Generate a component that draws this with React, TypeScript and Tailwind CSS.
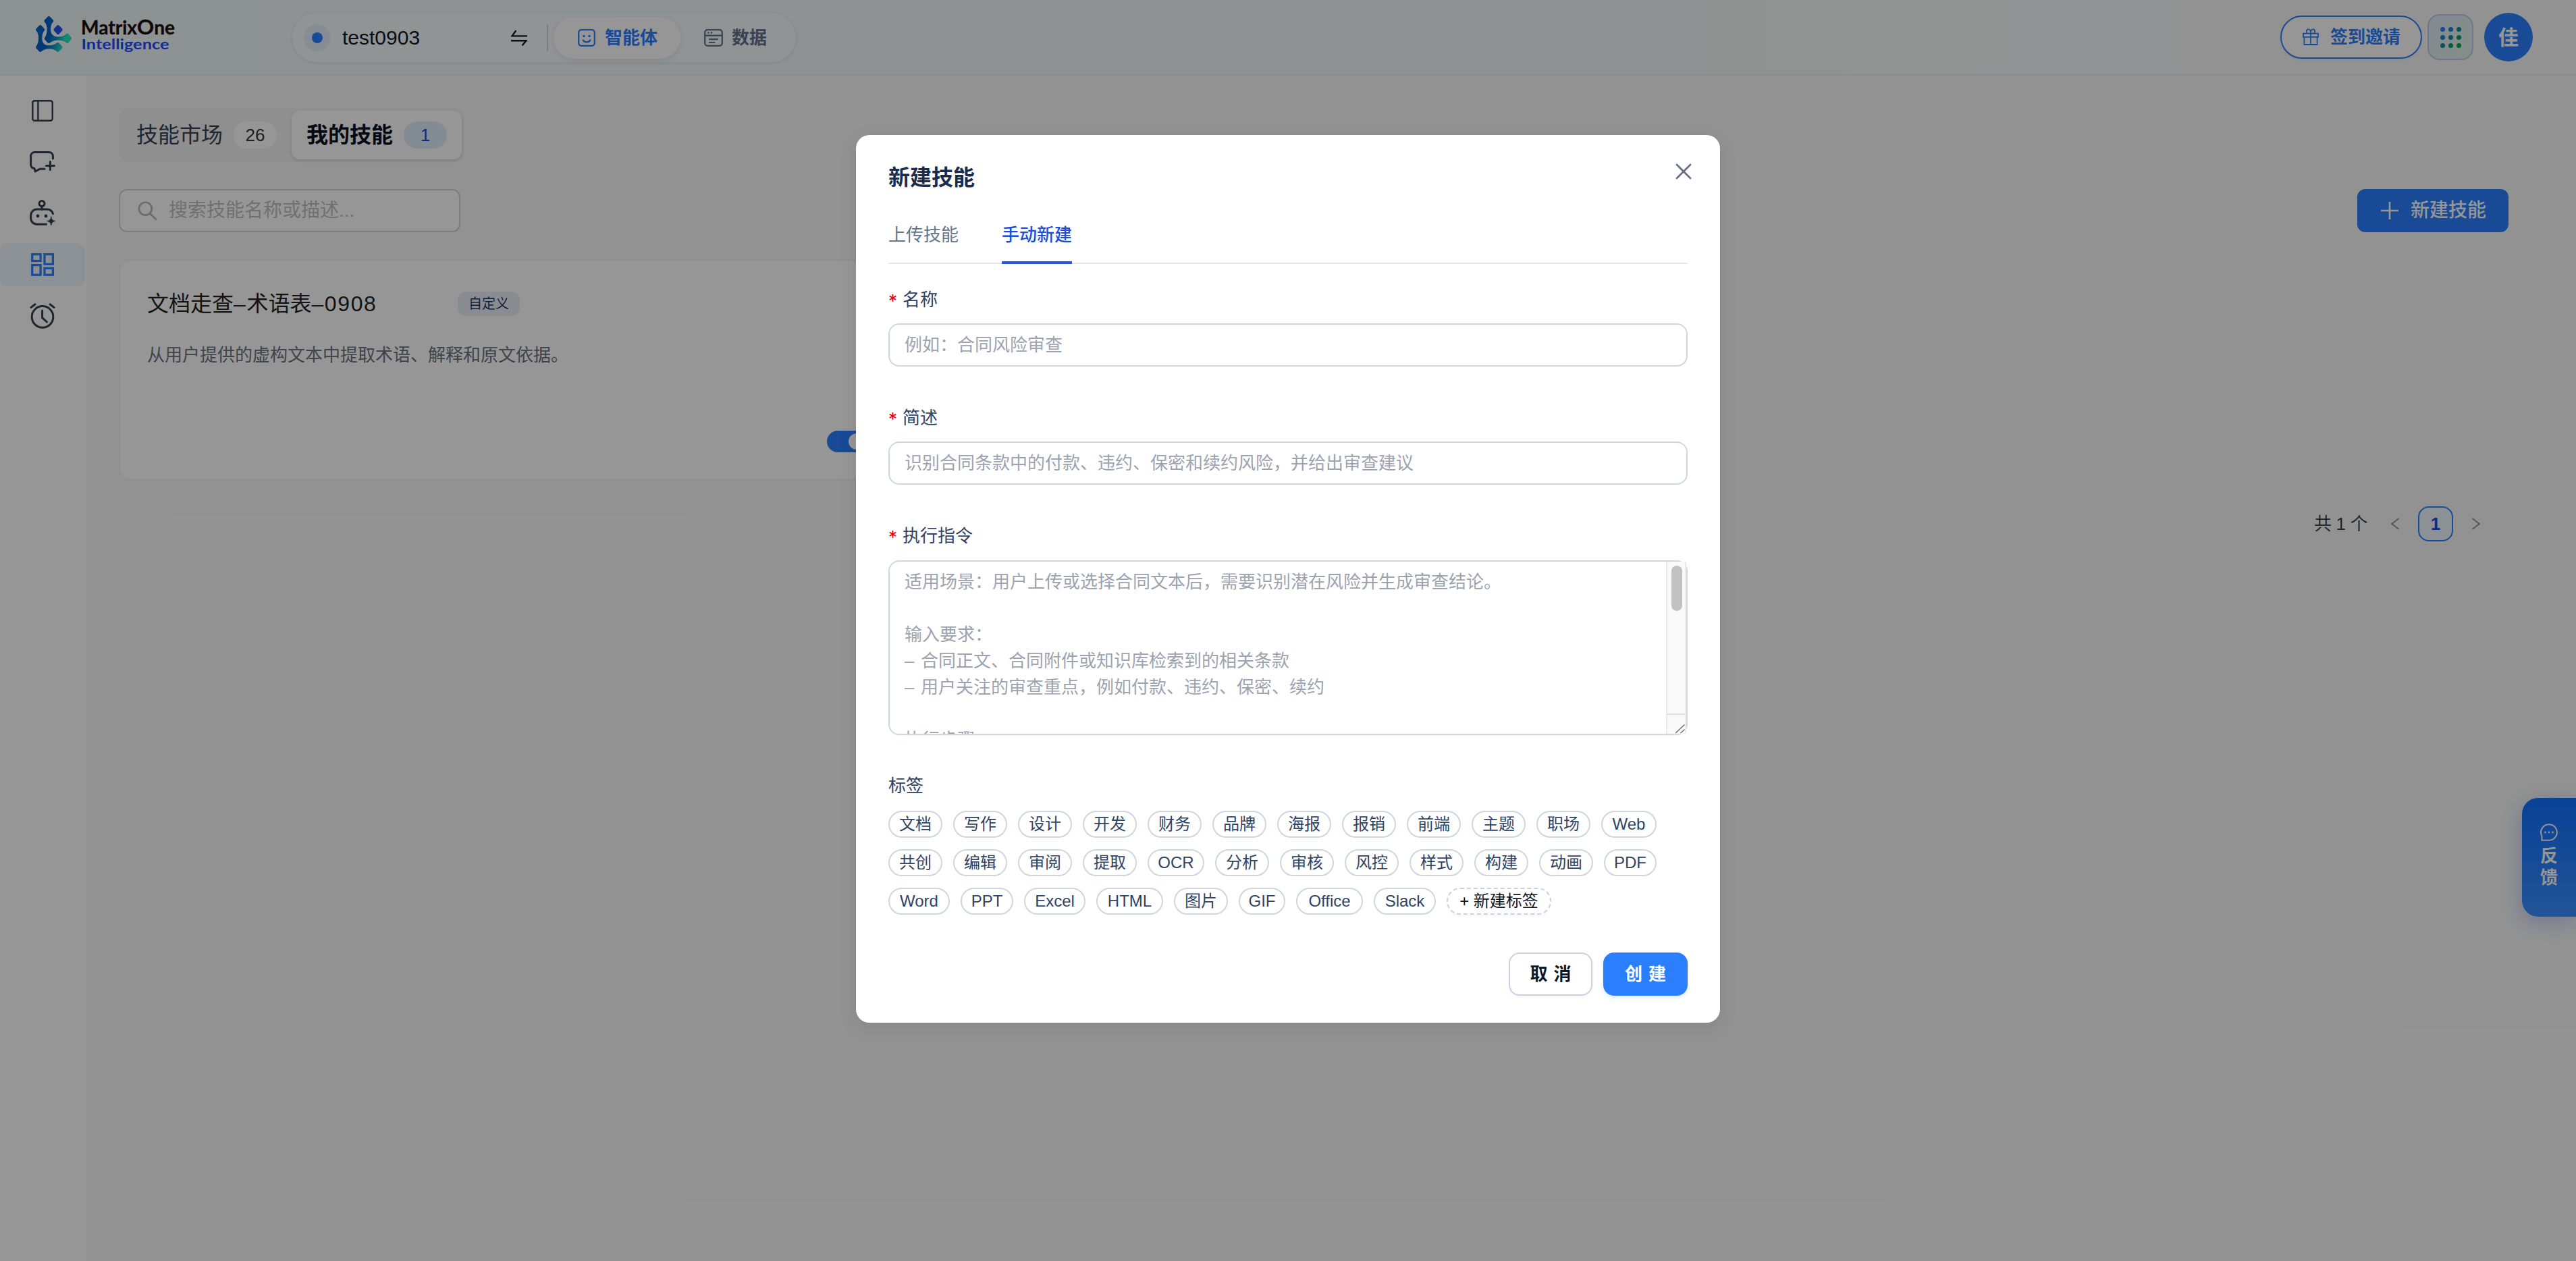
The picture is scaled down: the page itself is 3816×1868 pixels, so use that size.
import React from "react";

type IconProps = { className?: string };

const LogoMark = ({ className }: IconProps) => (
  <svg viewBox="0 0 55 55" className={className}>
    <defs>
      <linearGradient id="markGradient" gradientUnits="userSpaceOnUse" x1="4" y1="20" x2="50" y2="36">
        <stop offset="0" stopColor="#0068cc" />
        <stop offset="0.36" stopColor="#005cc0" />
        <stop offset="0.6" stopColor="#0f8cc4" />
        <stop offset="0.9" stopColor="#24e8bc" />
      </linearGradient>
    </defs>
    <g fill="url(#markGradient)">
      <path d="M18.9 1.6 Q20.3 0.2 21.7 1.6 L26.6 6.6 Q28 8 26.6 9.4 Q22.9 13.5 22.9 20 Q22.9 31.4 34 31.4 Q42 31.4 46.3 27.2 Q47.7 25.8 49.1 27.2 L53.6 32.4 Q54.7 33.9 53.6 35.3 L49.1 40.4 Q47.7 41.8 46.3 40.4 Q42 36.4 34 36.4 Q27 36.4 22.2 40.2 Q20.3 42 18.4 40.2 L14.4 35.6 Q13 34 14.4 32.4 Q17.7 28.5 17.7 20 Q17.7 13.5 14 9.4 Q12.6 8 14 6.6 Z" />
      <path d="M6.3 14.6 Q7.7 13.2 9.1 14.6 L13.6 19.6 Q15 21 13.6 22.4 Q10.3 26.5 10.3 33 Q10.3 44.3 20 44.3 Q28 44.3 32.4 40.6 Q33.8 39.2 35.2 40.6 L40 45.6 Q41.2 47 40 48.4 L35.2 53.4 Q33.8 54.6 32.4 53.4 Q28 49.3 20 49.3 Q14 49.3 9.2 53.2 Q7.7 54.6 6.3 53.4 L1.6 48.4 Q0.4 47 1.6 45.6 Q5.1 41 5.1 33 Q5.1 26.5 1.6 22.4 Q0.4 21 1.6 19.6 Z" />
    </g>
    <path d="M32.6 14.6 Q34 13.2 35.4 14.6 L40 19.6 Q41.2 21 40 22.4 L35.4 27.4 Q34 28.8 32.6 27.4 L28 22.4 Q26.8 21 28 19.6 Z" fill="#2450f4" />
  </svg>
);

const SwapIcon = ({ className }: IconProps) => (
  <svg viewBox="0 0 24 24" className={className} fill="none" stroke="currentColor" strokeWidth="2.4">
    <path d="M24 9.4 H1.5 L7.4 1.2" />
    <path d="M0 16.2 H22.4 L16.5 23.4" />
  </svg>
);

const SmileIcon = ({ className }: IconProps) => (
  <svg viewBox="0 0 26 26" className={className} fill="none" stroke="currentColor" strokeWidth="2.2" strokeLinecap="round">
    <rect x="1.2" y="1.2" width="23.6" height="23.6" rx="4" />
    <circle cx="9" cy="10.5" r="1.8" fill="currentColor" stroke="none" />
    <circle cx="17" cy="10.5" r="1.8" fill="currentColor" stroke="none" />
    <path d="M7.6 16.4 C9.8 20.4 16.2 20.4 18.4 16.4" />
  </svg>
);

const DataIcon = ({ className }: IconProps) => (
  <svg viewBox="0 0 28 26" className={className} fill="none" stroke="currentColor" strokeWidth="2.2" strokeLinecap="round">
    <rect x="1.2" y="1.2" width="25.6" height="23.6" rx="4" />
    <path d="M1.5 9.6 H26.5 M8 15.2 H20 M8 20 H15.5" />
    <circle cx="6.4" cy="5.4" r="1.3" fill="currentColor" stroke="none" />
    <circle cx="11" cy="5.4" r="1.3" fill="currentColor" stroke="none" />
  </svg>
);

const GiftIcon = ({ className }: IconProps) => (
  <svg viewBox="0 0 24 26" className={className} fill="none" stroke="currentColor" strokeWidth="1.8">
    <rect x="1" y="7.6" width="22" height="5.2" />
    <path d="M2.4 12.8 V24 H21.6 V12.8 M12 7.6 V24" />
    <path d="M12 7.4 C12 3.6 10.8 1.4 8.6 1.4 C5.4 1.4 5 5.4 7 7.4 M12 7.4 C12 3.6 13.2 1.4 15.4 1.4 C18.6 1.4 19 5.4 17 7.4" />
  </svg>
);

const PanelIcon = ({ className }: IconProps) => (
  <svg viewBox="0 0 32 32" className={className} fill="none" stroke="currentColor" strokeWidth="2.4">
    <rect x="1.3" y="1.3" width="29.4" height="29.4" rx="3" />
    <path d="M9.4 1.3 V30.7" />
  </svg>
);

const ChatPlusIcon = ({ className }: IconProps) => (
  <svg viewBox="0 0 38 32" className={className} fill="none" stroke="currentColor" strokeWidth="3" strokeLinecap="round" strokeLinejoin="round">
    <path d="M34.4 11 V7.6 C34.4 4 32.2 1.6 28.6 1.6 H7.6 C4 1.6 1.6 4 1.6 7.6 V19.6 C1.6 22.8 3.6 25.2 7 25.6 L8.2 30 L15 26.2 H22" />
    <path d="M30.4 15.6 V27.6 M24.4 21.6 H36.4" />
  </svg>
);

const RobotIcon = ({ className }: IconProps) => (
  <svg viewBox="0 0 38 38" className={className} fill="none" stroke="currentColor" strokeWidth="3" strokeLinecap="round">
    <circle cx="18" cy="5.6" r="4" />
    <path d="M18 9.8 V14" />
    <path d="M34.4 20.6 C33.2 16.6 29.6 14 25.4 14 H10.8 C5.6 14 1.6 18.2 1.6 23.4 V27 C1.6 32.4 5.6 36.2 10.8 36.2 H24.6" />
    <circle cx="12" cy="24" r="2.4" fill="currentColor" stroke="none" />
    <circle cx="24" cy="24" r="2.4" fill="currentColor" stroke="none" />
    <path d="M31.8 25.2 C32.6 29.2 33.8 30.6 38 31.5 C33.8 32.4 32.6 33.8 31.8 38 C31 33.8 29.8 32.4 25.6 31.5 C29.8 30.6 31 29.2 31.8 25.2 Z" fill="currentColor" stroke="currentColor" strokeWidth="0.8" />
  </svg>
);

const BlocksIcon = ({ className }: IconProps) => (
  <svg viewBox="0 0 34 34" className={className} fill="none" stroke="currentColor" strokeWidth="3.2">
    <rect x="1.7" y="1.7" width="12.4" height="9.8" />
    <rect x="20" y="1.7" width="12.4" height="14.6" />
    <rect x="1.7" y="17.6" width="12.4" height="14.6" />
    <rect x="20" y="22.4" width="12.4" height="9.8" />
  </svg>
);

const AlarmIcon = ({ className }: IconProps) => (
  <svg viewBox="0 0 38 38" className={className} fill="none" stroke="currentColor" strokeWidth="3" strokeLinecap="round" strokeLinejoin="round">
    <circle cx="19" cy="20.4" r="15.8" />
    <path d="M18.6 11 V21.6 L25.4 28 M2 6.4 L8 1.8 M36 6.4 L30 1.8" />
  </svg>
);

const SearchIcon = ({ className }: IconProps) => (
  <svg viewBox="0 0 30 30" className={className} fill="none" stroke="currentColor" strokeWidth="2.8">
    <circle cx="11.8" cy="11.6" r="9.8" />
    <path d="M18.8 18.8 L28.6 28.4" />
  </svg>
);

const PlusIcon = ({ className }: IconProps) => (
  <svg viewBox="0 0 26 26" className={className} fill="none" stroke="currentColor" strokeWidth="2.6">
    <path d="M13 0 V26 M0 13 H26" />
  </svg>
);

const CloseIcon = ({ className }: IconProps) => (
  <svg viewBox="0 0 24 24" className={className} fill="none" stroke="currentColor" strokeWidth="2.8" strokeLinecap="round">
    <path d="M2 2 L22 22 M22 2 L2 22" />
  </svg>
);

const Chevron = ({ className }: IconProps) => (
  <svg viewBox="0 0 12 18" className={className} fill="none" stroke="currentColor" strokeWidth="2">
    <path d="M11.4 1 L1.4 9 L11.4 17" />
  </svg>
);

const BubbleIcon = ({ className }: IconProps) => (
  <svg viewBox="0 0 26 26" className={className} fill="none" stroke="currentColor" strokeWidth="2">
    <path d="M13 1.2 A11.8 11.8 0 1 1 13 24.8 H2.4 V18.4 A11.8 11.8 0 0 1 13 1.2 Z" />
    <circle cx="7.4" cy="13" r="1.4" fill="currentColor" stroke="none" />
    <circle cx="13" cy="13" r="1.4" fill="currentColor" stroke="none" />
    <circle cx="18.6" cy="13" r="1.4" fill="currentColor" stroke="none" />
  </svg>
);

const gridDots = ["#2b7fff", "#1f86d0", "#128a9c", "#1f86c4", "#148c98", "#0a9a6c", "#128a9c", "#0a9a6c", "#08a84a"];

const Header = () => (
  <header className="flex h-[112px] items-start border-b-2 border-[#e9ecee] bg-[linear-gradient(90deg,#eff9f9_0%,#f3f9f9_22%,#f1f9f9_42%,#f8f9fa_85%,#f9f9f9_100%)]">
    <div className="ml-[52px] mt-[23px] flex">
      <LogoMark className="h-[55px] w-[55px]" />
      <svg viewBox="-4 -10 148 74" className="-mt-2.5 ml-[11px] h-[74px] w-[148px]">
        <g fontFamily="Lato, sans-serif" fontWeight="700">
          <text x="-2" y="27.6" fill="#1b0e0e" stroke="#1b0e0e" strokeWidth="0.3" fontSize="28" textLength="139" lengthAdjust="spacingAndGlyphs">
            Matrix<tspan fontSize="31">O</tspan>ne
          </text>
          <text x="-1.5" y="50.4" fill="#224cff" fontSize="21.5" textLength="130" lengthAdjust="spacingAndGlyphs">
            Intelligence
          </text>
        </g>
      </svg>
    </div>

    <div className="ml-[167px] mt-[19px] flex h-[73px] w-[746px] items-center rounded-full bg-white/35 shadow-[0_1px_6px_rgba(15,23,42,0.10)]">
      <span className="ml-[17px] flex h-10 w-10 items-center justify-center rounded-full bg-[#e8eefb]">
        <span className="h-4 w-4 rounded-full bg-[#2b7fff]" />
      </span>
      <span className="ml-[17px] w-[250px] text-[30px] leading-10 text-[#0f172a]">test0903</span>
      <SwapIcon className="h-6 w-6 text-[#0f172a]" />
      <span className="ml-[29px] h-10 w-0.5 bg-[#d2d6d9]" />
      <div className="ml-2 flex h-[62px] w-[188px] items-center rounded-full bg-white pl-9 text-[#2b7fff] shadow-[0_2px_10px_rgba(15,23,42,0.09)]">
        <SmileIcon className="h-[26px] w-[26px]" />
        <span className="ml-[14px] text-[26px] font-semibold leading-10">智能体</span>
      </div>
      <div className="flex items-center pl-[35px] text-[#64708a]">
        <DataIcon className="h-[26px] w-7" />
        <span className="ml-[13px] text-[26px] font-semibold leading-10">数据</span>
      </div>
    </div>

    <div className="ml-auto mr-16 mt-[19px] flex h-[72px] items-center">
      <div className="flex h-16 w-[210px] items-center rounded-full border-2 border-[#2b7fff] bg-white pl-[31px] text-[#2b7fff] shadow-[0_2px_4px_rgba(15,23,42,0.06)]">
        <GiftIcon className="h-[26px] w-6" />
        <span className="ml-[17px] text-[26px] font-bold leading-10">签到邀请</span>
      </div>
      <div className="ml-2 grid h-[68px] w-[68px] grid-cols-[7px_7px_7px] place-content-center gap-[5px] rounded-[18px] border-2 border-[#b9cdea] bg-[linear-gradient(135deg,#e2ebfb,#e0f2e6)]">
        {gridDots.map((color, i) => (
          <span key={i} className="h-[7px] w-[7px] rounded-full" style={{ backgroundColor: color }} />
        ))}
      </div>
      <div className="ml-4 flex h-[72px] w-[72px] items-center justify-center rounded-full bg-[#2b7fff] text-[30px] font-semibold text-white">佳</div>
    </div>
  </header>
);

const Sidebar = () => (
  <nav className="flex w-32 flex-col bg-white text-[#33404f]">
    <div className="mt-5 flex h-16 w-[126px] items-center justify-center">
      <PanelIcon className="h-8 w-8" />
    </div>
    <div className="mt-3 flex h-16 w-[126px] items-center justify-center">
      <ChatPlusIcon className="h-8 w-[38px]" />
    </div>
    <div className="mt-3 flex h-16 w-[126px] items-center justify-center pb-0.5">
      <RobotIcon className="h-[38px] w-[38px]" />
    </div>
    <div className="mt-3 flex h-16 w-[126px] items-center justify-center rounded-xl bg-[#eff6ff] text-[#2b7fff]">
      <BlocksIcon className="h-[34px] w-[34px]" />
    </div>
    <div className="mt-3 flex h-16 w-[126px] items-center justify-center">
      <AlarmIcon className="h-[38px] w-[38px]" />
    </div>
  </nav>
);

const Main = () => (
  <main className="flex flex-1 flex-col pl-12 pr-[100px] pt-12">
    <div className="flex h-20 w-[512px] items-center rounded-2xl bg-[#f3f3f4] px-1 text-[32px]">
      <div className="flex h-[72px] items-center px-[22px] text-[#334155]">
        技能市场
        <span className="ml-4 flex h-10 w-16 items-center justify-center rounded-full bg-white text-[26px] text-[#333]">26</span>
      </div>
      <div className="flex h-[72px] items-center rounded-xl bg-white px-[22px] font-semibold text-[#0a1020] shadow-[0_2px_5px_rgba(0,0,0,0.12)]">
        我的技能
        <span className="ml-4 flex h-10 w-16 items-center justify-center rounded-full bg-[#dfecfd] text-[26px] font-normal text-[#1447e6]">1</span>
      </div>
    </div>

    <div className="mt-10 flex justify-between">
      <div className="flex h-16 w-[506px] items-center rounded-xl border-2 border-[#d4d4d4] bg-white pl-[26px] text-[#bfbfbf]">
        <SearchIcon className="h-[29px] w-[29px] text-[#b8b8b8]" />
        <span className="ml-[17px] text-[28px]">搜索技能名称或描述...</span>
      </div>
      <button className="flex h-16 w-[224px] items-center rounded-xl bg-[#2b7fff] pl-[35px] text-white">
        <PlusIcon className="h-[26px] w-[26px]" />
        <span className="ml-[18px] text-[28px] font-medium">新建技能</span>
      </button>
    </div>

    <div className="mt-10 grid grid-cols-3 gap-6">
      <article className="flex h-[328px] flex-col rounded-2xl border-2 border-[#f1f2f3] bg-white px-10">
        <div className="mt-[40px] flex h-12 items-center">
          <h3 className="w-[460px] text-[32px] text-[#222]">
            文档走查<span className="tracking-[1.6px]">–</span>术语表<span className="tracking-[1.6px]">–0908</span>
          </h3>
          <span className="flex h-9 w-[92px] items-center justify-center rounded-xl bg-[#e9f0f7] text-[20px] text-[#24365f]">自定义</span>
        </div>
        <p className="mt-8 text-[26px] leading-10 text-[#6a7282]">从用户提供的虚构文本中提取术语、解释和原文依据。</p>
        <div className="mb-10 ml-auto mr-[13px] mt-auto flex h-8 w-[60px] items-center justify-end rounded-full bg-[#2b7fff] p-1">
          <span className="h-6 w-6 rounded-full bg-white" />
        </div>
      </article>
    </div>

    <div className="mt-[38px] flex h-[52px] items-center justify-end text-[26px] text-[#334155]">
      <span className="tracking-[-0.4px]">共 1 个</span>
      <Chevron className="ml-[35px] h-[18px] w-3 text-[#8d939f]" />
      <span className="ml-7 flex h-[52px] w-[52px] items-center justify-center rounded-2xl border-2 border-[#2b7fff] bg-[#eff6ff] font-bold text-[#1447e6]">1</span>
      <Chevron className="ml-7 mr-[42px] h-[18px] w-3 rotate-180 text-[#8d939f]" />
    </div>
  </main>
);

const Label = ({ children, required = true }: { children: React.ReactNode; required?: boolean }) => (
  <div className="flex h-10 items-center text-[26px] text-[#2f4365]">
    {required && <span className="w-[21px] pt-1 font-['Inter'] text-[26px] leading-9 text-[#e7000b]">*</span>}
    {children}
  </div>
);

const tagRows: [string, string][][] = [
  [
    ["文档", "w-20"], ["写作", "w-20"], ["设计", "w-20"], ["开发", "w-20"], ["财务", "w-20"], ["品牌", "w-20"],
    ["海报", "w-20"], ["报销", "w-20"], ["前端", "w-20"], ["主题", "w-20"], ["职场", "w-20"], ["Web", "w-[82px]"],
  ],
  [
    ["共创", "w-20"], ["编辑", "w-20"], ["审阅", "w-20"], ["提取", "w-20"], ["OCR", "w-[84px]"], ["分析", "w-20"],
    ["审核", "w-20"], ["风控", "w-20"], ["样式", "w-20"], ["构建", "w-20"], ["动画", "w-20"], ["PDF", "w-[78px]"],
  ],
  [
    ["Word", "w-[91px]"], ["PPT", "w-[78px]"], ["Excel", "w-[91px]"], ["HTML", "w-[99px]"],
    ["图片", "w-20"], ["GIF", "w-[69px]"], ["Office", "w-[99px]"], ["Slack", "w-[92px]"],
  ],
];

const instructionLines = [
  { text: "适用场景：用户上传或选择合同文本后，需要识别潜在风险并生成审查结论。" },
  { text: "" },
  { text: "输入要求：" },
  { text: "合同正文、合同附件或知识库检索到的相关条款", bullet: true },
  { text: "用户关注的审查重点，例如付款、违约、保密、续约", bullet: true },
  { text: "" },
  { text: "执行步骤：" },
];

const Modal = () => (
  <section className="flex h-[1315px] w-[1280px] flex-col rounded-[20px] bg-white px-12 shadow-[0_8px_28px_rgba(0,0,0,0.08)]">
    <div className="mt-[39px] flex h-12 items-center justify-between">
      <h2 className="text-[32px] font-bold text-[#1b2b4b]">新建技能</h2>
      <CloseIcon className="-mr-1.5 mb-[18px] h-6 w-6 text-[#667085]" />
    </div>

    <div className="mt-9 flex h-[68px] gap-16 border-b-2 border-[#e5e7eb] text-[26px]">
      <div className="h-[68px] pt-[5px] leading-10 text-[#64748b]">上传技能</div>
      <div className="h-[68px] border-b-4 border-[#2558e0] pt-[5px] font-medium leading-10 text-[#1d4ed8]">手动新建</div>
    </div>

    <div className="mt-[33px]">
      <Label>名称</Label>
      <div className="mt-[15px] flex h-16 items-center rounded-2xl border-2 border-[#d1d5dc] px-[22px] text-[26px] text-[#9ca3af]">例如：合同风险审查</div>
    </div>
    <div className="mt-14">
      <Label>简述</Label>
      <div className="mt-[15px] flex h-16 items-center rounded-2xl border-2 border-[#d1d5dc] px-[22px] text-[26px] text-[#9ca3af]">
        识别合同条款中的付款、违约、保密和续约风险，并给出审查建议
      </div>
    </div>
    <div className="mt-14">
      <Label>执行指令</Label>
      <div className="mt-[16px] flex h-[259px] rounded-2xl border-2 border-[#d1d5dc]">
        <div className="h-[255px] flex-1 overflow-hidden pl-[22px] pt-[11px] text-[26px] leading-[39px] text-[#9ca3af]">
          {instructionLines.map(({ text, bullet }, i) => (
            <p key={i} className="h-[39px] whitespace-pre">
              {bullet && <span className="inline-block w-6">–</span>}
              {text}
            </p>
          ))}
        </div>
        <div className="flex h-[255px] w-[30px] flex-col border-x-2 border-[#ebebeb] bg-[#fafafa]">
          <span className="ml-1.5 mt-1.5 h-[67px] w-4 rounded-full bg-[#c2c2c2]" />
          <div className="mt-auto flex h-[30px] items-end justify-end border-t-2 border-[#dedede]">
            <svg viewBox="0 0 14 14" className="h-3.5 w-3.5" fill="none" stroke="#6b6b6b" strokeWidth="1.4">
              <path d="M0 13 L13.5 0.5 M7.5 13 L13.5 7.5" />
            </svg>
          </div>
        </div>
      </div>
    </div>

    <div className="mt-[55px]">
      <Label required={false}>标签</Label>
      <div className="mt-[17px] flex flex-col gap-[17px] text-[24px] text-[#2f4365]">
        {tagRows.map((row, i) => (
          <div key={i} className="flex gap-4">
            {row.map(([name, width]) => (
              <span key={name} className={`flex h-10 items-center justify-center whitespace-nowrap rounded-full border-2 border-[#d1d5dc] ${width}`}>
                {name}
              </span>
            ))}
            {i === 2 && (
              <span className="flex h-10 w-[155px] items-center justify-center whitespace-nowrap rounded-full border-2 border-dashed border-[#c5d3e3] text-[#0f172a] shadow-[0_2px_3px_rgba(15,23,42,0.04)]">
                + 新建标签
              </span>
            )}
          </div>
        ))}
      </div>
    </div>

    <div className="mt-[56px] flex justify-end gap-4 text-[26px] font-bold">
      <button className="flex h-16 w-[124px] items-center justify-center gap-[9px] rounded-2xl border-2 border-[#c5d3e3] text-[#0f172a] shadow-[0_2px_4px_rgba(15,23,42,0.04)]">
        <span>取</span>
        <span>消</span>
      </button>
      <button className="flex h-16 w-[125px] items-center justify-center gap-[9px] rounded-2xl bg-[#2b7fff] text-white shadow-[0_3px_6px_rgba(43,127,255,0.16)]">
        <span>创</span>
        <span>建</span>
      </button>
    </div>
  </section>
);

export default function App() {
  return (
    <div className="relative flex h-[1868px] w-full flex-col overflow-hidden bg-[#f9f9f9] font-['Liberation_Sans','Noto_Sans_CJK_SC',sans-serif]">
      <Header />
      <div className="flex flex-1">
        <Sidebar />
        <Main />
      </div>
      <aside className="absolute right-0 top-[1182px] flex h-44 w-20 flex-col items-center rounded-l-[24px] bg-[linear-gradient(180deg,#0f6fff,#3a90ff)] pt-[38px] text-[26px] font-semibold leading-8 text-white shadow-[0_8px_32px_rgba(43,100,255,0.3)]">
        <BubbleIcon className="mb-[6px] h-[26px] w-[26px]" />
        <span>反</span>
        <span>馈</span>
      </aside>
      <div className="absolute inset-0 flex items-start justify-center bg-black/41 pt-[200px]">
        <Modal />
      </div>
    </div>
  );
}
